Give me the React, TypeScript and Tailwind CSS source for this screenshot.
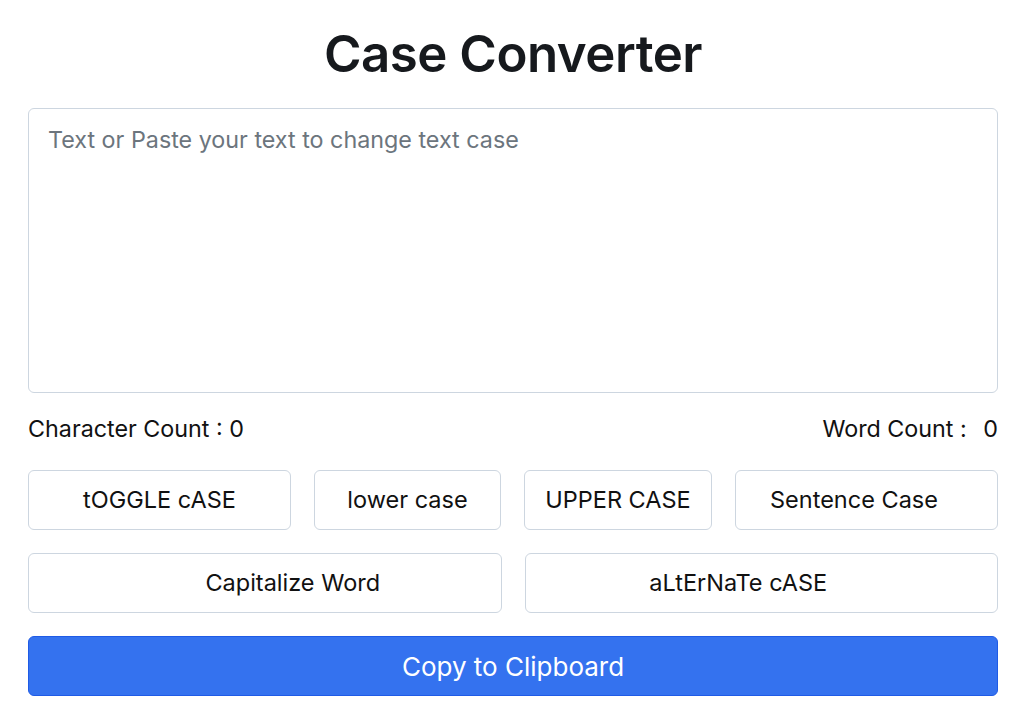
import React, { useState } from 'react';

const FONT = "font-['Inter','Liberation_Sans',sans-serif]";
const BTN = 'h-[60px] rounded-[6px] border border-[#cdd6e0] text-[23.5px] text-[#111]';

function App() {
  const [text, setText] = useState('');
  const words = text.trim() ? text.trim().split(/\s+/).length : 0;

  return (
    <div className={`${FONT} min-h-screen bg-white pl-[28px] pr-[26px] pt-[22px] text-[#111]`}>
      <h1 className="text-center text-[51px] leading-[64px] font-semibold tracking-[-0.5px] text-[#16191d]">
        Case Converter
      </h1>
      <textarea
        value={text}
        onChange={(e) => setText(e.target.value)}
        placeholder="Text or Paste your text to change text case"
        className="mt-[22px] block h-[285px] w-full resize-none rounded-[6px] border border-[#cdd6e0] px-[19px] py-[14px] text-[23.3px] leading-[34px] text-[#212529] outline-none placeholder:text-[#6c757d]"
      />
      <div className="mt-[20px] flex items-center justify-between text-[23.3px] leading-[32px]">
        <span>Character Count : {text.length}</span>
        <span>
          Word Count : <span className="ml-[10px]">{words}</span>
        </span>
      </div>
      <div className="mt-[25px] flex gap-[23px]">
        <button className={`${BTN} w-[263px]`}>tOGGLE cASE</button>
        <button className={`${BTN} w-[187px]`}>lower case</button>
        <button className={`${BTN} w-[188px]`}>UPPER CASE</button>
        <button className={`${BTN} flex-1 pr-[25px]`}>Sentence Case</button>
      </div>
      <div className="mt-[23px] grid grid-cols-2 gap-[23px]">
        <button className={`${BTN} pl-[56px]`}>Capitalize Word</button>
        <button className={`${BTN} pr-[46px]`}>aLtErNaTe cASE</button>
      </div>
      <button className="mt-[23px] h-[60px] w-full rounded-[6px] border border-[#1f5be6] bg-[#3472ef] text-[26px] text-white">
        Copy to Clipboard
      </button>
    </div>
  );
}

export default App;
